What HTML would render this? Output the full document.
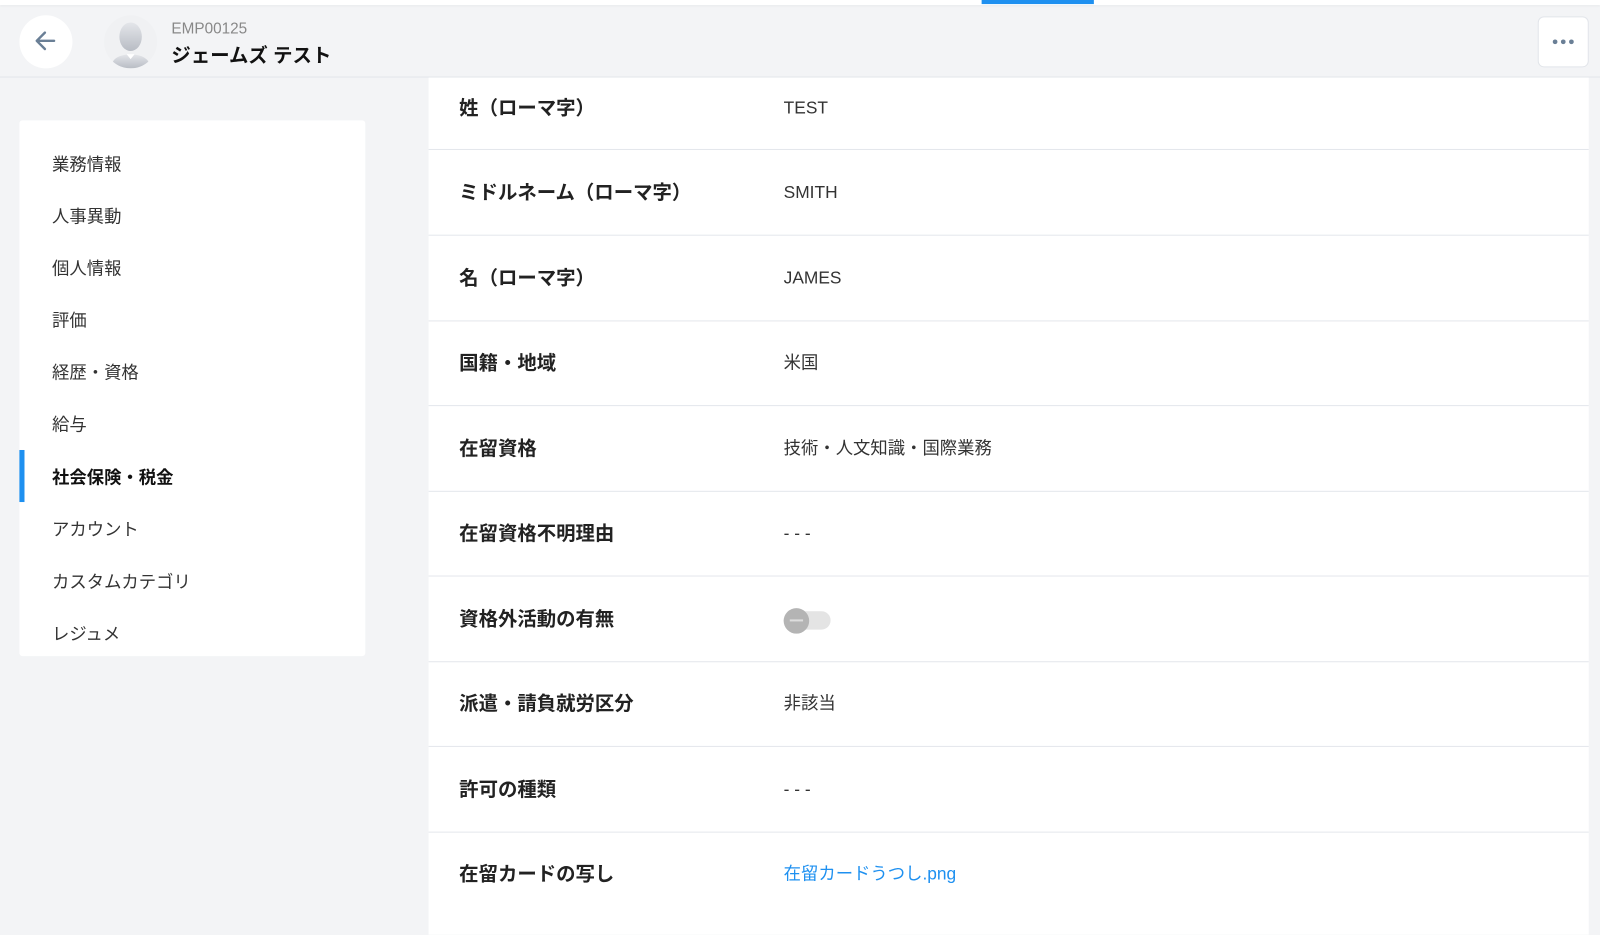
<!DOCTYPE html>
<html><head><meta charset="utf-8"><style>
*{margin:0;padding:0;box-sizing:border-box}
html,body{width:1600px;height:911px;overflow:hidden;background:#f3f4f6}
#w{position:absolute;left:0;top:0;width:1568px;height:893px;transform:scale(1.0204);transform-origin:0 0;font-family:"Liberation Sans","Noto Sans CJK JP",sans-serif;color:#222}
.top{position:absolute;left:0;top:0;width:1568px;height:5px;background:#fff;box-shadow:0 1px 2px rgba(0,0,0,.05)}
.blue{position:absolute;left:962px;top:0;width:110px;height:4px;background:#1e90f0}
.hdr{position:absolute;left:0;top:75px;width:1568px;height:1px;background:#e2e5ea}
.back{position:absolute;left:19px;top:15px;width:52px;height:52px;border-radius:50%;background:#fff}
.av{position:absolute;left:102px;top:15px;width:52px;height:52px;border-radius:50%;background:#f0f1f3;overflow:hidden}
.emp{position:absolute;left:168px;top:20px;font-size:15px;color:#888}
.name{position:absolute;left:168px;top:40px;font-size:19px;font-weight:bold;color:#111}
.more{position:absolute;left:1507px;top:16px;width:50px;height:50px;border:1px solid #e2e5ea;border-radius:6px;background:#fff}
.side{position:absolute;left:19px;top:118px;width:339px;height:525px;background:#fff;border-radius:3px}
.side div{position:absolute;left:32px;font-size:17px;color:#333}
.act{position:absolute;left:19px;top:441px;width:5px;height:51px;background:#1e90f0}
.main{position:absolute;left:420px;top:76px;width:1137px;height:840px;background:#fff}
.row{position:absolute;left:0;width:1137px;height:84px;border-bottom:1px solid #e4e7ec}
.row .l{position:absolute;left:30px;top:0;line-height:60px;font-size:19px;font-weight:bold;color:#222}
.row .v{position:absolute;left:348px;top:0;line-height:60px;font-size:17px;color:#333}
</style></head><body><div id="w">
<div class="top"></div><div class="blue"></div><div class="hdr"></div>
<div class="back"><svg width="52" height="52"><path d="M34 25H18M25 17l-8 8 8 8" stroke="#6a7f96" stroke-width="2.4" fill="none" stroke-linecap="round" stroke-linejoin="round"/></svg></div>
<div class="av"><svg width="52" height="52"><defs><linearGradient id="g" x1="0" y1="0" x2="0" y2="1"><stop offset="0" stop-color="#e4e6ea"/><stop offset="1" stop-color="#b8bcc4"/></linearGradient></defs><ellipse cx="26" cy="21" rx="11" ry="14" fill="url(#g)"/><path d="M6 52c2-10 8-13 20-14 12 1 18 4 20 14z" fill="url(#g)"/><path d="M22 38l4 5 4-5" fill="#fff"/></svg></div>
<div class="emp">EMP00125</div>
<div class="name">ジェームズ テスト</div>
<div class="more"><svg width="48" height="48"><circle cx="16" cy="24" r="2.3" fill="#6a7f96"/><circle cx="24" cy="24" r="2.3" fill="#6a7f96"/><circle cx="32" cy="24" r="2.3" fill="#6a7f96"/></svg></div>
<div class="side">
<div style="top:29px">業務情報</div>
<div style="top:80px">人事異動</div>
<div style="top:131px">個人情報</div>
<div style="top:182px">評価</div>
<div style="top:233px">経歴・資格</div>
<div style="top:284px">給与</div>
<div style="top:336px;font-weight:bold;color:#111">社会保険・税金</div>
<div style="top:387px">アカウント</div>
<div style="top:438px">カスタムカテゴリ</div>
<div style="top:489px">レジュメ</div>
</div>
<div class="act"></div>
<div class="main">
<div class="row" style="top:0;height:71px"><span class="l" style="top:1px">姓（ローマ字）</span><span class="v">TEST</span></div>
<div class="row" style="top:71px"><span class="l" style="top:13px">ミドルネーム（ローマ字）</span><span class="v" style="top:12px">SMITH</span></div>
<div class="row" style="top:154.5px"><span class="l" style="top:13px">名（ローマ字）</span><span class="v" style="top:12px">JAMES</span></div>
<div class="row" style="top:238px"><span class="l" style="top:13px">国籍・地域</span><span class="v" style="top:12px">米国</span></div>
<div class="row" style="top:321.5px"><span class="l" style="top:13px">在留資格</span><span class="v" style="top:12px">技術・人文知識・国際業務</span></div>
<div class="row" style="top:405px"><span class="l" style="top:13px">在留資格不明理由</span><span class="v" style="top:12px">- - -</span></div>
<div class="row" style="top:488.5px"><span class="l" style="top:13px">資格外活動の有無</span><span style="position:absolute;left:348px;top:34px;width:46px;height:18px;border-radius:9px;background:#e4e4e4"></span><span style="position:absolute;left:348px;top:31px;width:25px;height:25px;border-radius:50%;background:#b4b4b4"></span><span style="position:absolute;left:354px;top:42px;width:13px;height:2px;background:#ddd"></span></div>
<div class="row" style="top:572px"><span class="l" style="top:13px">派遣・請負就労区分</span><span class="v" style="top:12px">非該当</span></div>
<div class="row" style="top:655.5px"><span class="l" style="top:13px">許可の種類</span><span class="v" style="top:12px">- - -</span></div>
<div class="row" style="top:739px;border:none"><span class="l" style="top:13px">在留カードの写し</span><span class="v" style="top:12px;color:#1e90f0">在留カードうつし.png</span></div>
</div>
</div></body></html>
